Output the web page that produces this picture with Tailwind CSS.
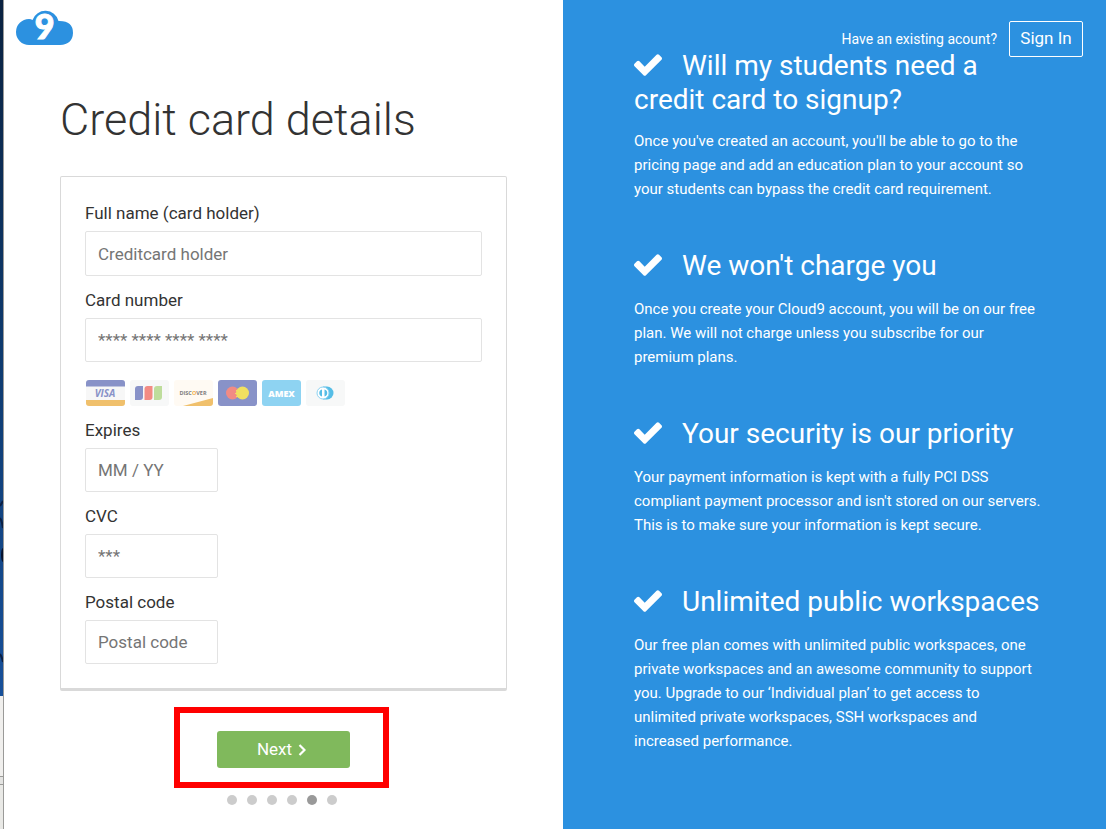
<!DOCTYPE html>
<html lang="en">
<head>
    <meta charset="UTF-8">
    <meta name="viewport" content="width=device-width, initial-scale=1.0">
    <title>Cloud9 - Credit card details</title>
    <script src="https://cdn.jsdelivr.net/npm/@tailwindcss/browser@4"></script>
</head>
<body class="bg-white font-[Roboto,sans-serif] text-[#333]">
    <div class="grid grid-cols-[4px_559fr_543fr] min-h-screen">

        <!-- Desktop edge -->
        <div class="flex flex-col border-r border-[#9a9a98]">
            <div class="flex h-[84%] items-end bg-linear-to-b from-[#0a2240] via-[#0e3a6e] to-[#17509a]">
                <svg viewBox="0 0 3 196" class="h-[196px] w-[3px]">
                    <path fill="none" stroke="#0a1f44" stroke-width="2" d="M3 1L0 6M0 18Q2 21 3 28M0 154Q2 157 3 162"/>
                    <ellipse cx="3" cy="55" rx="2" ry="7" fill="#06122e"/>
                </svg>
            </div>
            <div class="h-20 bg-[#f0efed]"></div>
            <div class="h-[9px] border-y border-[#9a9a98] bg-[#e4e4e2]"></div>
            <div class="grow bg-[#e9e9e6]"></div>
        </div>

        <!-- Form side -->
        <main>
            <header class="px-3 pt-2">
                <a href="#" aria-label="Cloud9" class="block w-[57px]">
                    <svg viewBox="0 0 57 36" class="block w-[57px] h-9 mt-px overflow-visible">
                        <path fill="#2c91e0" d="M13 36A12.900 12.900 0 0 1 13 10Q15 10 16.500 11A13.600 13.600 0 0 1 42.500 12Q57 11.500 57 24Q56.500 35.500 44 36z"/>
                        <text x="28.500" y="30" text-anchor="middle" font-family="Lato" font-size="34" font-weight="900" fill="#fff" stroke="#fff">9</text>
                    </svg>
                </a>
            </header>

            <div class="px-14">
                <h1 class="mt-[45px] text-[45px] leading-[60px] font-light">Credit card details</h1>

                <form class="mt-[26px] rounded-xs border border-b-[3px] border-[#d9d9d9] px-6 py-6 text-[17px] leading-6">
                    <label for="holder" class="block">Full name (card holder)</label>
                    <input id="holder" type="text" placeholder="Creditcard holder" class="mt-[6px] block h-[45px] w-full rounded-xs border border-[#e3e3e3] px-3 placeholder:text-[#757575]">

                    <label for="number" class="mt-3 block">Card number</label>
                    <input id="number" type="text" placeholder="**** **** **** ****" class="mt-[6px] block h-11 w-full rounded-xs border border-[#e3e3e3] px-3 placeholder:text-[#757575]">

                    <!-- Accepted cards -->
                    <div class="mt-[18px] flex gap-[5px] pl-px">
                        <svg viewBox="0 0 39 26" class="w-[39px] h-[26px]">
                            <rect width="39" height="26" rx="3" fill="#f7f7f7"/>
                            <path fill="#8892c8" d="M0 6.500V3Q0 0 3 0H36Q39 0 39 3V6.500z"/>
                            <path fill="#f0c06c" d="M0 20H39V23Q39 26 36 26H3Q0 26 0 23z"/>
                            <text x="19" y="17" text-anchor="middle" font-family="Open Sans" font-size="10" font-weight="700" font-style="italic" fill="#8892c8">VISA</text>
                        </svg>
                        <svg viewBox="0 0 39 26" class="w-[39px] h-[26px]">
                            <rect width="39" height="26" rx="3" fill="#f7f8f8"/>
                            <path fill="#8892c8" d="M5 20V9Q5 6 8 6H13V17Q13 20 10 20z"/>
                            <path fill="#f28b84" d="M14.500 20V9Q14.500 6 17.500 6H22.500V17Q22.500 20 19.500 20z"/>
                            <path fill="#bedd9c" d="M24 20V9Q24 6 27 6H32V17Q32 20 29 20z"/>
                        </svg>
                        <svg viewBox="0 0 39 26" class="w-[39px] h-[26px]">
                            <rect width="39" height="26" rx="3" fill="#fffaf3"/>
                            <path fill="#f0c06c" d="M9 26L39 18V23Q39 26 36 26z"/>
                            <text x="19" y="15" text-anchor="middle" font-family="Open Sans" font-size="5.500" font-weight="700" fill="#7d7d7d">DISC<tspan fill="#f0b04c">O</tspan>VER</text>
                        </svg>
                        <svg viewBox="0 0 39 26" class="w-[39px] h-[26px]">
                            <rect width="39" height="26" rx="3" fill="#8892c8"/>
                            <circle cx="14.500" cy="13" r="6.500" fill="#f28b84"/>
                            <circle cx="24.500" cy="13" r="6.500" fill="#f0e060"/>
                            <path stroke="#f0e060" d="M18 10.500h3M17 13.500h3M18 16.500h3"/>
                        </svg>
                        <svg viewBox="0 0 39 26" class="w-[39px] h-[26px]">
                            <rect width="39" height="26" rx="3" fill="#8ed3f2"/>
                            <text x="19.500" y="16.500" text-anchor="middle" font-family="Open Sans" font-size="9" font-weight="800" fill="#fff">AMEX</text>
                        </svg>
                        <svg viewBox="0 0 39 26" class="w-[39px] h-[26px]">
                            <rect width="39" height="26" rx="3" fill="#f7f8f8"/>
                            <path fill="#55bde6" d="M17 6.500H21A6.500 6.500 0 0 1 21 19.500H17z"/>
                            <circle cx="17" cy="13" r="6" fill="#fff" stroke="#8ed3f2"/>
                            <path fill="#55bde6" d="M16 9.500V16.500A3.600 3.600 0 0 1 16 9.500zM18.500 9.500V16.500A3.600 3.600 0 0 0 18.500 9.500z"/>
                        </svg>
                    </div>

                    <label for="expires" class="mt-3 block">Expires</label>
                    <input id="expires" type="text" placeholder="MM / YY" class="mt-[6px] block h-11 w-[133px] rounded-xs border border-[#e3e3e3] px-3 placeholder:text-[#757575]">

                    <label for="cvc" class="mt-3 block">CVC</label>
                    <input id="cvc" type="text" placeholder="***" class="mt-[6px] block h-11 w-[133px] rounded-xs border border-[#e3e3e3] px-3 placeholder:text-[#757575]">

                    <label for="postal" class="mt-3 block">Postal code</label>
                    <input id="postal" type="text" placeholder="Postal code" class="mt-[6px] block h-11 w-[133px] rounded-xs border border-[#e3e3e3] px-3 placeholder:text-[#757575]">
                </form>

                <div class="mt-4 flex flex-col items-center pr-1">
                    <div class="border-[6px] border-[#f00] pt-[18px] pb-[14px] pl-[37px] pr-[33px]">
                        <button type="button" class="flex h-[37px] w-[133px] items-center justify-center gap-[6px] rounded-[3px] bg-[#80b95c] pr-1 text-[17px] text-white">
                            Next
                            <svg viewBox="0 0 8 12" class="w-2 h-3"><path d="M1.500 1L6.500 6L1.500 11" fill="none" stroke="#fff" stroke-width="2.200"/></svg>
                        </button>
                    </div>
                    <!-- Steps -->
                    <div class="mt-[7px] flex gap-[10px]">
                        <span class="size-[10px] rounded-full bg-[#ccc]"></span>
                        <span class="size-[10px] rounded-full bg-[#ccc]"></span>
                        <span class="size-[10px] rounded-full bg-[#ccc]"></span>
                        <span class="size-[10px] rounded-full bg-[#ccc]"></span>
                        <span class="size-[10px] rounded-full bg-[#999]"></span>
                        <span class="size-[10px] rounded-full bg-[#ccc]"></span>
                    </div>
                </div>
            </div>
        </main>

        <!-- FAQ side -->
        <aside class="relative bg-[#2c91e0] pt-[49px] pl-[71px] pr-[62px] text-white">
            <div class="absolute top-[21px] right-[23px] flex items-center gap-3 text-[14px]">
                <span>Have an existing acount?</span>
                <a href="#" class="flex h-9 w-[74px] items-center justify-center rounded-xs border border-white text-[17px]">Sign In</a>
            </div>

            <section>
                <h2 class="text-[28px] leading-[34px]"><svg viewBox="121 334 1550 1188" class="mr-5 inline-block h-[22px] w-7 align-[-1px]"><path fill="#fff" d="M1671 566q0 40-28 68l-724 724-136 136q-28 28-68 28t-68-28l-136-136-362-362q-28-28-28-68t28-68l136-136q28-28 68-28t68 28l294 295 656-657q28-28 68-28t68 28l136 136q28 28 28 68z"/></svg>Will my students need a credit card to signup?</h2>
                <p class="mt-3 text-[15px] leading-6">Once you've created an account, you'll be able to go to the pricing page and add an education plan to your account so your students can bypass the credit card requirement.</p>
            </section>

            <section class="mt-12">
                <h2 class="text-[28px] leading-[34px]"><svg viewBox="121 334 1550 1188" class="mr-5 inline-block h-[22px] w-7 align-[-1px]"><path fill="#fff" d="M1671 566q0 40-28 68l-724 724-136 136q-28 28-68 28t-68-28l-136-136-362-362q-28-28-28-68t28-68l136-136q28-28 68-28t68 28l294 295 656-657q28-28 68-28t68 28l136 136q28 28 28 68z"/></svg>We won't charge you</h2>
                <p class="mt-[14px] text-[15px] leading-6">Once you create your Cloud9 account, you will be on our free plan. We will not charge unless you subscribe for our premium plans.</p>
            </section>

            <section class="mt-12">
                <h2 class="text-[28px] leading-[34px]"><svg viewBox="121 334 1550 1188" class="mr-5 inline-block h-[22px] w-7 align-[-1px]"><path fill="#fff" d="M1671 566q0 40-28 68l-724 724-136 136q-28 28-68 28t-68-28l-136-136-362-362q-28-28-28-68t28-68l136-136q28-28 68-28t68 28l294 295 656-657q28-28 68-28t68 28l136 136q28 28 28 68z"/></svg>Your security is our priority</h2>
                <p class="mt-[14px] text-[15px] leading-6">Your payment information is kept with a fully PCI DSS compliant payment processor and isn't stored on our servers. This is to make sure your information is kept secure.</p>
            </section>

            <section class="mt-12">
                <h2 class="text-[28px] leading-[34px]"><svg viewBox="121 334 1550 1188" class="mr-5 inline-block h-[22px] w-7 align-[-1px]"><path fill="#fff" d="M1671 566q0 40-28 68l-724 724-136 136q-28 28-68 28t-68-28l-136-136-362-362q-28-28-28-68t28-68l136-136q28-28 68-28t68 28l294 295 656-657q28-28 68-28t68 28l136 136q28 28 28 68z"/></svg>Unlimited public workspaces</h2>
                <p class="mt-[14px] text-[15px] leading-6">Our free plan comes with unlimited public workspaces, one private workspaces and an awesome community to support you. Upgrade to our ‘Individual plan’ to get access to unlimited private workspaces, SSH workspaces and increased performance.</p>
            </section>
        </aside>
    </div>
</body>
</html>
